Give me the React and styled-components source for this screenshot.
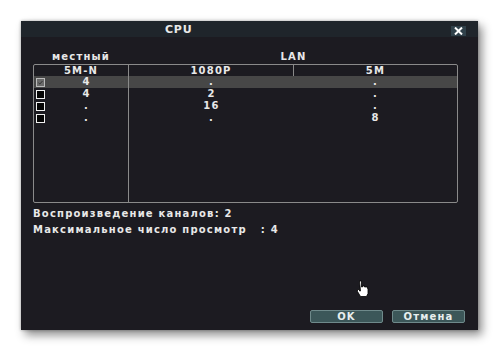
import styled, { createGlobalStyle } from "styled-components"

const Global = createGlobalStyle`
  html, body { margin: 0; padding: 0; background: #ffffff; }
  body { font-family: "DejaVu Sans", "Liberation Sans", sans-serif; }
`

const Page = styled.div`
  width: 500px;
  height: 352px;
  padding: 21px 0 0 21px;
  box-sizing: border-box;
`

const Dialog = styled.div`
  position: relative;
  width: 457px;
  height: 309px;
  background: #1c1b21;
  box-shadow: 4px 5px 9px rgba(0, 0, 0, 0.45), 0 0 3px rgba(0, 0, 0, 0.3);
  display: flex;
  flex-direction: column;
  color: #e8e8e8;
  font-weight: bold;
  font-size: 10px;
  letter-spacing: 1.2px;
`

const TitleBar = styled.div`
  height: 16px;
  background: #1f252b;
  display: flex;
  align-items: center;
`

const Title = styled.div`
  margin-left: 144px;
  flex: 1;
  font-size: 11px;
  letter-spacing: 0.8px;
`

const Close = styled.div`
  width: 15px;
  height: 10px;
  margin-right: 12px;
  margin-top: 3px;
  background: #30414a;
  display: flex;
  align-items: center;
  justify-content: center;
`

const Body = styled.div`
  flex: 1;
  padding: 12px 20px 7px 12px;
  display: flex;
  flex-direction: column;
`

const Labels = styled.div`
  display: grid;
  grid-template-columns: 96px 1fr;
  height: 15px;
  align-items: center;
  text-align: center;
`

const Table = styled.div`
  border: 1px solid #8a8a8a;
  border-radius: 2px;
  height: 137px;
  display: grid;
  grid-template-columns: 95px 165px 1fr;
  grid-template-rows: 11px repeat(4, 12px) 1fr;
`

const Cell = styled.div`
  display: flex;
  align-items: center;
  justify-content: center;
  line-height: 1;
  border-right: ${(p) => (p.$divider ? "1px solid #8a8a8a" : "none")};
  background: ${(p) => (p.$active ? "#474747" : "transparent")};
`

const FirstCell = styled(Cell)`
  justify-content: flex-start;
  padding-left: 2px;
`

const Value = styled.span`
  flex: 1;
  text-align: center;
`

const Check = styled.span`
  width: 7px;
  height: 7px;
  border: 1px solid ${(p) => (p.$checked ? "#bbbbbb" : "#f0f0f0")};
  background: ${(p) => (p.$checked ? "#6a6a6a" : "#050505")};
  display: flex;
  align-items: center;
  justify-content: center;
  flex-shrink: 0;
`

const Info = styled.div`
  margin-top: 5px;
  display: flex;
  flex-direction: column;
  gap: 4px;
  line-height: 12px;
`

const Buttons = styled.div`
  margin-top: auto;
  display: flex;
  justify-content: flex-end;
  gap: 9px;
  margin-right: -7px;
`

const Button = styled.button`
  width: 73px;
  height: 13px;
  padding: 0;
  border: 1px solid #6f8a8b;
  border-radius: 2px;
  background: #3c5759;
  color: #e8eeee;
  font-family: inherit;
  font-weight: bold;
  font-size: 10px;
  letter-spacing: 1.2px;
  line-height: 1;
`

const Cursor = styled.svg`
  position: absolute;
  left: 335px;
  top: 259px;
`

const rows = [
  ["4", ".", "."],
  ["4", "2", "."],
  [".", "16", "."],
  [".", ".", "8"],
]

export default function App() {
  return (
    <Page>
      <Global />
      <Dialog>
        <TitleBar>
          <Title>CPU</Title>
          <Close>
            <svg width="11" height="8" viewBox="0 0 11 8">
              <path d="M2 0.5 L9 7.5 M9 0.5 L2 7.5" stroke="#ffffff" strokeWidth="2" />
            </svg>
          </Close>
        </TitleBar>
        <Body>
          <Labels>
            <span>местный</span>
            <span>LAN</span>
          </Labels>
          <Table>
            <Cell $divider>5M-N</Cell>
            <Cell $divider>1080P</Cell>
            <Cell>5M</Cell>
            {rows.map((r, i) => [
              <FirstCell key={`a${i}`} $divider $active={i === 0}>
                <Check $checked={i === 0}>
                  {i === 0 && (
                    <svg width="5" height="5" viewBox="0 0 5 5">
                      <path d="M0.5 2.8 L1.8 4 L4.5 1" stroke="#222" strokeWidth="0.8" fill="none" />
                    </svg>
                  )}
                </Check>
                <Value>{r[0]}</Value>
              </FirstCell>,
              <Cell key={`b${i}`} $active={i === 0}>{r[1]}</Cell>,
              <Cell key={`c${i}`} $active={i === 0}>{r[2]}</Cell>,
            ])}
            <Cell $divider />
            <Cell />
            <Cell />
          </Table>
          <Info>
            <span>Воспроизведение каналов: 2</span>
            <span>Максимальное число просмотр&nbsp;&nbsp;&nbsp;: 4</span>
          </Info>
          <Buttons>
            <Button>OK</Button>
            <Button>Отмена</Button>
          </Buttons>
        </Body>
        <Cursor width="13" height="17" viewBox="0 0 13 17">
          <path
            d="M3.5 1 h2 v6 h1 v-1 h2 v1 h1 v0 h2 v1.5 h0.5 v5 l-1.5 3 h-6 l-3 -5 v-2 h2 v1.5 h1 z"
            fill="#ffffff"
            stroke="#000"
            strokeWidth="0.8"
          />
        </Cursor>
      </Dialog>
    </Page>
  )
}
